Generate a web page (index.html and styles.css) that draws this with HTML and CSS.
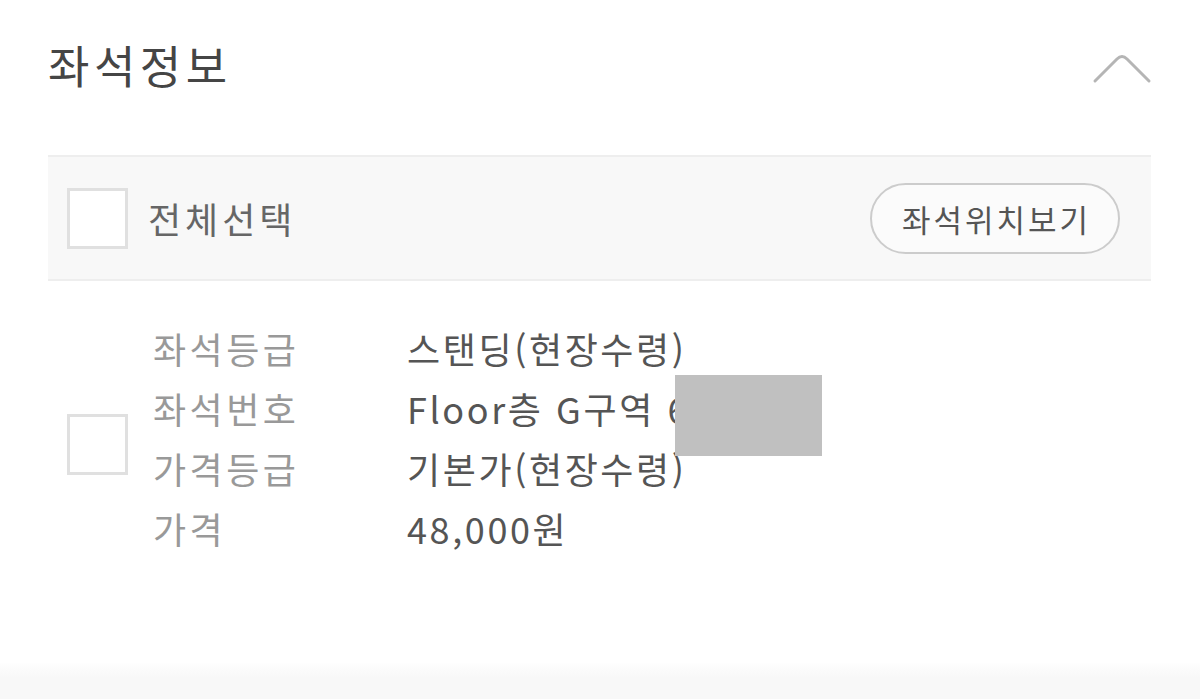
FILE: index.html
```html
<!DOCTYPE html>
<html lang="ko">
<head>
<meta charset="utf-8">
<title>좌석정보</title>
<link rel="stylesheet" href="styles.css">
</head>
<body>
<div class="page">
  <section class="seat">
    <div class="seat-head">
      <h2 class="seat-title">좌석정보</h2>
      <svg class="chevron" width="60" height="32" viewBox="0 0 60 32" aria-hidden="true">
        <path d="M3 29 L25 7 Q30 2 35 7 L57 29" fill="none" stroke="#b5b5b5" stroke-width="3" stroke-linecap="round" stroke-linejoin="round"/>
      </svg>
    </div>
    <div class="select-bar">
      <label class="select-all">
        <span class="box"></span>
        <span class="select-text">전체선택</span>
      </label>
      <button class="pill">좌석위치보기</button>
    </div>
    <div class="item">
      <span class="box item-box"></span>
      <dl class="info">
        <div class="row"><dt>좌석등급</dt><dd>스탠딩(현장수령)</dd></div>
        <div class="row"><dt>좌석번호</dt><dd class="rel">Floor층 G구역 6<span class="redact"></span></dd></div>
        <div class="row"><dt>가격등급</dt><dd>기본가(현장수령)</dd></div>
        <div class="row"><dt>가격</dt><dd>48,000원</dd></div>
      </dl>
    </div>
  </section>
  <div class="footer-shade"></div>
</div>
</body>
</html>
```

FILE: styles.css
```css
* { box-sizing: border-box; }
html, body { margin: 0; padding: 0; background: #fff; }
body {
  font-family: "Noto Sans CJK KR", "Noto Sans", sans-serif;
  color: #444;
}
.page {
  height: 699px;
  display: flex;
  flex-direction: column;
  overflow: hidden;
}
.seat {
  padding: 0 49px 0 48px;
}
.seat-head {
  height: 155px;
  display: flex;
  align-items: center;
  justify-content: space-between;
  padding-bottom: 26px;
}
.seat-title {
  margin: 0;
  font-size: 45px;
  font-weight: 400;
  line-height: 60px;
  color: #454545;
  letter-spacing: 4.5px;
}
.chevron {
  margin-right: -1px;
  margin-top: 6px;
}
.select-bar {
  height: 126px;
  background: #f8f8f8;
  border-top: 2px solid #eeeeee;
  border-bottom: 2px solid #eeeeee;
  display: flex;
  align-items: center;
  justify-content: space-between;
  padding: 0 31px 0 19px;
}
.select-all {
  display: flex;
  align-items: center;
  gap: 20px;
}
.box {
  display: block;
  width: 61px;
  height: 61px;
  background: #fff;
  border: 3px solid #e0e0e0;
}
.select-text {
  font-size: 36px;
  line-height: 48px;
  color: #666;
  letter-spacing: 4px;
}
.pill {
  font-family: inherit;
  width: 250px;
  height: 71px;
  border: 2px solid #cccccc;
  border-radius: 36px;
  background: #fbfbfb;
  font-size: 31px;
  color: #555;
  padding: 0 0 0 3px;
  letter-spacing: 3px;
  margin-top: 0;
}
.item {
  display: flex;
  align-items: center;
  padding: 37px 0 0 19px;
}
.item-box {
  margin-top: 12px;
}
.info {
  margin: 0 0 0 25px;
}
.row {
  display: flex;
  height: 60px;
  align-items: center;
}
dt {
  width: 254px;
  font-size: 36px;
  color: #999;
  letter-spacing: 3.5px;
}
dd {
  margin: 0;
  font-size: 36px;
  color: #555;
  letter-spacing: 2.6px;
}
.rel { position: relative; }
.redact {
  position: absolute;
  top: -7px;
  width: 147px;
  height: 81px;
  margin-left: -15px;
  background: #c0c0c0;
}
.footer-shade {
  margin-top: auto;
  height: 36px;
  background: linear-gradient(#fefefe, #f8f8f8 40%, #f8f8f8);
}
```
